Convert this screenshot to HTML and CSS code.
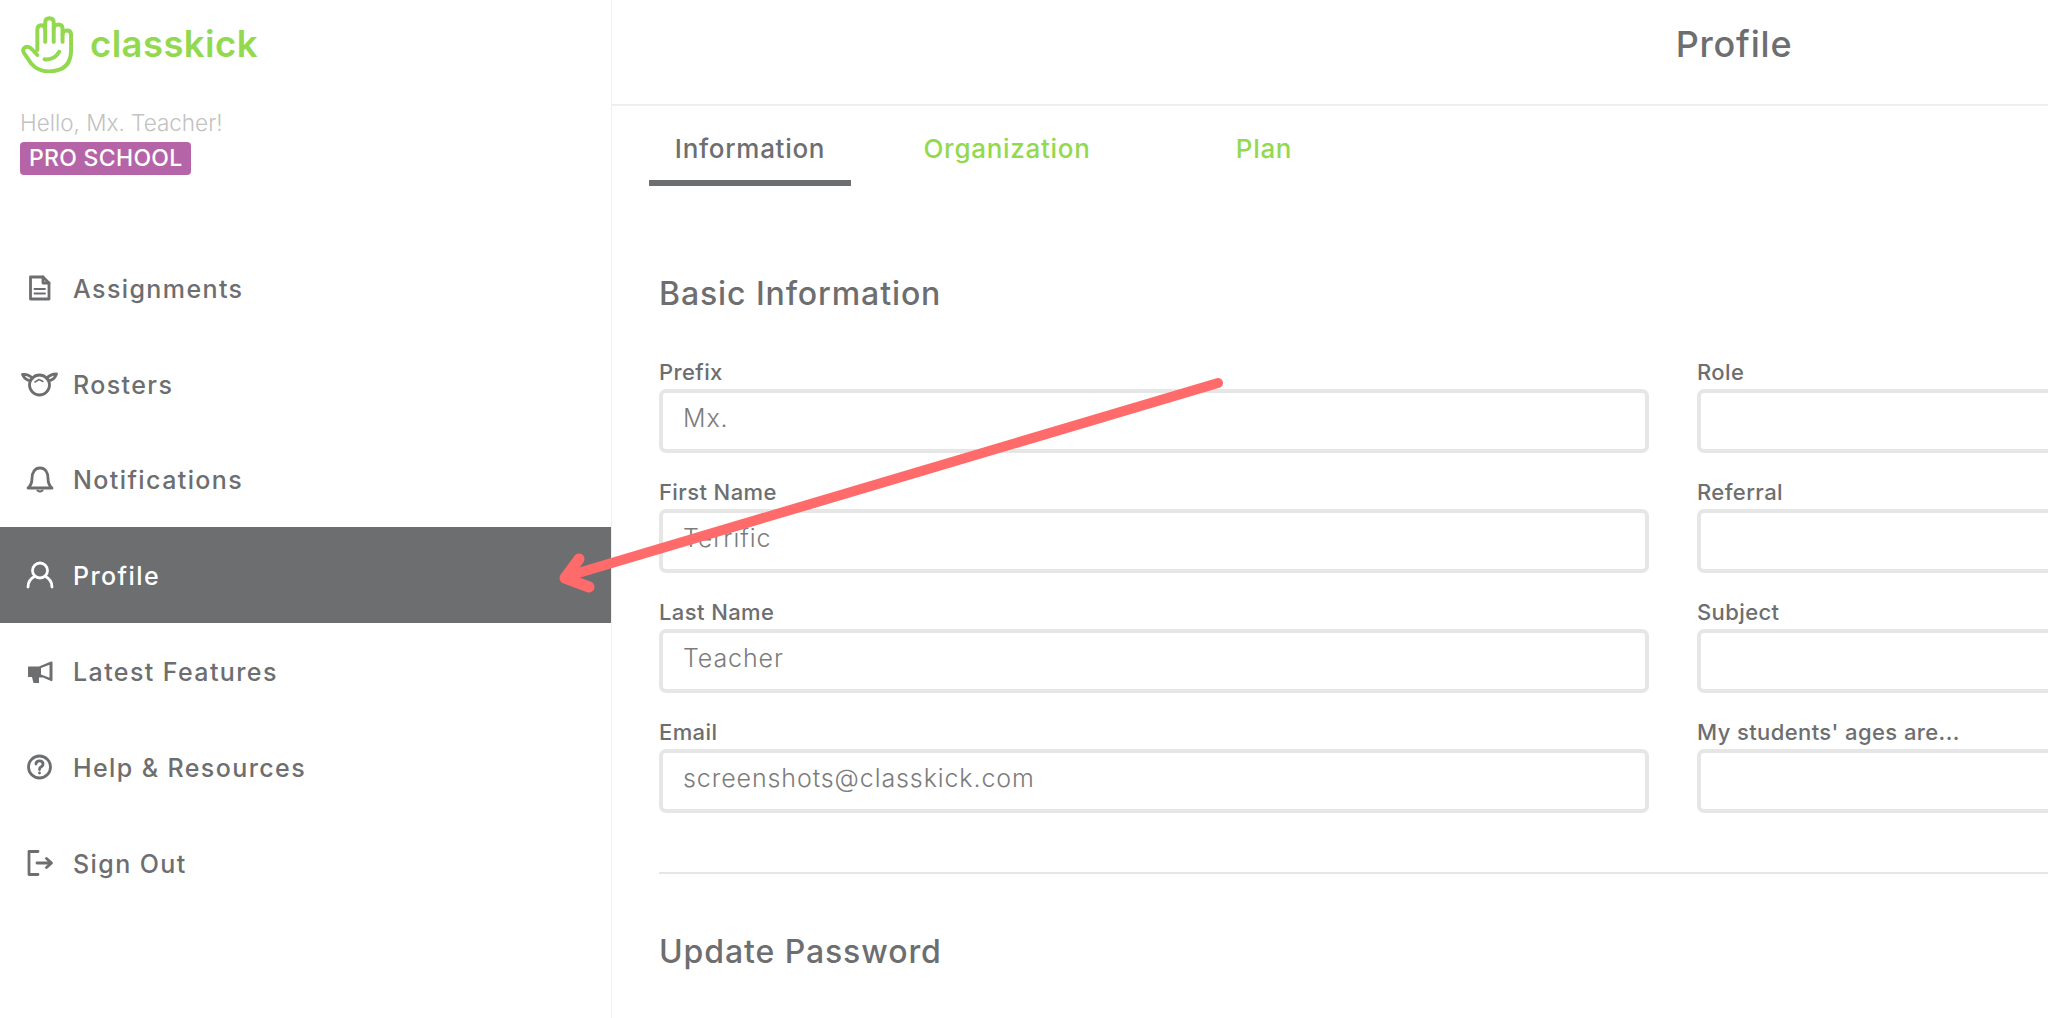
FILE: index.html
```html
<!DOCTYPE html>
<html lang="en">
<head>
  <meta charset="UTF-8">
  <title>Profile</title>
  <link rel="stylesheet" href="styles.css">
</head>
<body>
  <div class="page">
    <aside class="sidebar">
      <div class="sidebar-head">
        <div class="brand">
          <svg class="brand-hand" viewBox="58 46 160 174" fill="none" stroke="#93d94f" stroke-width="12" stroke-linecap="round" stroke-linejoin="round">
            <path d="M110 150V88Q110 74 122 74Q134 74 134 88V66Q134 53 147 53Q160 53 160 66V85Q160 72 174 72Q187 72 187 85V103Q187 90 200 90Q213 90 213 103V150Q213 215 145 215Q112 215 92 192L70 160Q62 148 72 142Q82 136 92 146L110 165"/>
            <path d="M134 88V125M160 85V125M187 103V125"/>
            <path d="M132 178Q160 182 177 155"/>
          </svg>
          <span class="brand-name">classkick</span>
        </div>
        <div class="hello">Hello, Mx. Teacher!</div>
        <span class="plan-badge">PRO SCHOOL</span>
      </div>

      <nav class="nav">
        <a class="nav-item" href="#">
          <svg class="nav-icon" viewBox="0 0 40 28" fill="none" stroke="currentColor" stroke-width="2.800" stroke-linejoin="round" stroke-linecap="round">
            <path d="M10.5 3H23L29 9V25H10.5Z"/><path d="M23 3V9H29"/><path d="M14.500 15H25M14.500 19.500H25" stroke-width="1.800"/>
          </svg>
          <span>Assignments</span>
        </a>
        <a class="nav-item" href="#">
          <svg class="nav-icon" viewBox="0 0 40 28" fill="none" stroke="currentColor" stroke-width="2.800" stroke-linejoin="round" stroke-linecap="round">
            <circle cx="19.500" cy="15" r="10"/>
            <path d="M12.500 8.500C9.500 5 6 4 2.500 4.500C4 8 7 10.500 10.500 10.500"/>
            <path d="M26.500 8.500C29.500 5 33 4 36.500 4C35 8 32 10.500 28.500 10.500"/>
            <path d="M15 12L19 9.500M20 10L23 11.500" stroke-width="1.500"/>
          </svg>
          <span>Rosters</span>
        </a>
        <a class="nav-item" href="#">
          <svg class="nav-icon" viewBox="0 0 40 28" fill="none" stroke="currentColor" stroke-width="2.800" stroke-linejoin="round" stroke-linecap="round">
            <path d="M8 23C11 20.500 12 18.500 12 13.500C12 7 15 3 20 3C25 3 28 7 28 13.500C28 18.500 29 20.500 32 23Z"/>
            <path d="M17.500 25.500Q20 27.500 22.500 25.500" stroke-width="2"/>
          </svg>
          <span>Notifications</span>
        </a>
        <a class="nav-item nav-item-active" href="#">
          <svg class="nav-icon" viewBox="0 0 40 28" fill="none" stroke="currentColor" stroke-width="2.800" stroke-linecap="round">
            <circle cx="20" cy="9.500" r="7.500"/>
            <path d="M8 26C8 20.500 10.500 17.500 14.500 15.500M32 26C32 20.500 29.500 17.500 25.500 15.500"/>
          </svg>
          <span>Profile</span>
        </a>
        <a class="nav-item" href="#">
          <svg class="nav-icon" viewBox="0 0 40 28" fill="currentColor">
            <path d="M8.500 9.500H19L31 4.500Q32.500 4 32.500 5.500V23Q32.500 24.500 31 24L23 20.500H19V26H13.500L12 20H8.500Q8 20 8 19.500V10Q8 9.500 8.500 9.500Z"/>
            <path d="M21 11L29.500 7.800V20.800L21 17.500Z" fill="#fff"/>
          </svg>
          <span>Latest Features</span>
        </a>
        <a class="nav-item" href="#">
          <svg class="nav-icon" viewBox="0 0 40 28" fill="none" stroke="currentColor" stroke-width="2.800" stroke-linecap="round">
            <circle cx="19.500" cy="14" r="11"/>
            <path d="M16 11Q16 7.800 19.500 7.800Q23 7.800 23 11Q23 13 20.800 14Q19.500 14.800 19.500 16.500"/>
            <path d="M19.500 20V20.100" stroke-width="2.800"/>
          </svg>
          <span>Help &amp; Resources</span>
        </a>
        <a class="nav-item" href="#">
          <svg class="nav-icon" viewBox="0 0 40 28" fill="none" stroke="currentColor" stroke-width="2.800" stroke-linecap="round" stroke-linejoin="round">
            <path d="M18 2.500H9V25.500H18"/>
            <path d="M17 14H31M26.500 9.500L31.500 14L26.500 18.500"/>
          </svg>
          <span>Sign Out</span>
        </a>
      </nav>
    </aside>

    <main class="main">
      <header class="topbar">Profile</header>

      <div class="tabs">
        <a class="tab tab-active" href="#">Information</a>
        <a class="tab" href="#">Organization</a>
        <a class="tab" href="#">Plan</a>
      </div>

      <div class="content">
        <h2 class="section-title">Basic Information</h2>
        <div class="form-grid">
          <div class="field">
            <label class="field-label">Prefix</label>
            <input class="field-input" type="text" value="Mx.">
          </div>
          <div class="field">
            <label class="field-label">Role</label>
            <input class="field-input" type="text">
          </div>
          <div class="field">
            <label class="field-label">First Name</label>
            <input class="field-input" type="text" value="Terrific">
          </div>
          <div class="field">
            <label class="field-label">Referral</label>
            <input class="field-input" type="text">
          </div>
          <div class="field">
            <label class="field-label">Last Name</label>
            <input class="field-input" type="text" value="Teacher">
          </div>
          <div class="field">
            <label class="field-label">Subject</label>
            <input class="field-input" type="text">
          </div>
          <div class="field">
            <label class="field-label">Email</label>
            <input class="field-input" type="text" value="screenshots@classkick.com">
          </div>
          <div class="field">
            <label class="field-label">My students' ages are...</label>
            <input class="field-input" type="text">
          </div>
        </div>
        <hr class="divider">
        <h2 class="section-title section-title-password">Update Password</h2>
      </div>
    </main>
  </div>

  <!-- annotation drawn over the page -->
  <svg class="arrow" viewBox="0 0 2048 1018" fill="none" stroke="#ff6b6b" stroke-linecap="round" stroke-linejoin="round">
    <path d="M1218 383L568 576" stroke-width="10"/>
    <path d="M579 559L565 578L589 587" stroke-width="11"/>
  </svg>
</body>
</html>
```

FILE: styles.css
```css
* {
  box-sizing: border-box;
  margin: 0;
  padding: 0;
}

html, body {
  height: 100%;
  overflow: hidden;
}

body {
  position: relative;
  background: #fff;
  color: #6d6e70;
  font-family: Inter, "Liberation Sans", sans-serif;
}

a {
  text-decoration: none;
  color: inherit;
}

.page {
  display: flex;
  height: 1018px;
}

/* sidebar */
.sidebar {
  flex: 0 0 612px;
  border-right: 1px solid #f0f0f0;
}

.sidebar-head {
  height: 240px;
  padding: 16px 20px 0;
}

.brand {
  display: flex;
  align-items: center;
  gap: 17px;
}

.brand-hand {
  width: 53px;
  height: 57px;
}

.brand-name {
  color: #93d94f;
  font-size: 36.500px;
  font-weight: 600;
  letter-spacing: 0.4px;
  line-height: 57px;
}

.hello {
  margin-top: 37px;
  color: #c2c2c2;
  font-size: 22.500px;
  font-weight: 300;
  line-height: 26px;
}

.plan-badge {
  display: inline-block;
  margin-top: 6px;
  padding: 0 8px 0 9px;
  background: #b565a7;
  border-radius: 4px;
  color: #fff;
  font-size: 23px;
  font-weight: 500;
  letter-spacing: 0.3px;
  line-height: 33px;
}

.nav-item {
  display: flex;
  align-items: center;
  gap: 13px;
  height: 95.8px;
  padding-left: 20px;
  font-size: 25px;
  font-weight: 500;
  letter-spacing: 1.4px;
}

.nav-item span {
  padding-top: 2px;
}

.nav-item-active {
  background: #6d6e70;
  color: #fff;
}

.nav-icon {
  flex: none;
  width: 40px;
  height: 28px;
}

/* main column runs past the right edge of the window */
.main {
  flex: none;
  width: 2244px;
}

.topbar {
  height: 106px;
  border-bottom: 2px solid #eee;
  font-size: 36px;
  font-weight: 500;
  letter-spacing: 0.8px;
  line-height: 88px;
  text-align: center;
}

.tabs {
  display: flex;
  gap: 55px;
  padding-left: 37px;
}

.tab {
  width: 202px;
  height: 80px;
  color: #93d94f;
  font-size: 26px;
  font-weight: 500;
  letter-spacing: 0.7px;
  line-height: 86px;
  text-align: center;
}

.tab-active {
  border-bottom: 6px solid #6d6e70;
  color: #6d6e70;
}

.content {
  padding: 0 169px 0 47px;
}

.section-title {
  margin-top: 88px;
  font-size: 32px;
  font-weight: 500;
  letter-spacing: 0.9px;
  line-height: 40px;
}

.form-grid {
  display: grid;
  grid-template-columns: 1fr 1fr;
  gap: 0 48px;
  margin-top: 46px;
}

.field {
  height: 120px;
}

.field-label {
  display: block;
  height: 24px;
  margin-bottom: 5px;
  font-size: 22px;
  font-weight: 500;
  letter-spacing: 0.4px;
  line-height: 24px;
}

.field-input {
  display: block;
  width: 100%;
  height: 64px;
  padding: 0 20px 6px;
  background: #fff;
  border: 4px solid #e6e6e6;
  border-radius: 7px;
  color: #7c7c7c;
  font-family: inherit;
  font-size: 25px;
  font-weight: 300;
  letter-spacing: 0.9px;
  outline: none;
}

.divider {
  margin-top: 32px;
  border: 0;
  border-top: 2px solid #e6e6e6;
}

.section-title-password {
  margin-top: 58px;
}

.arrow {
  position: absolute;
  top: 0;
  left: 0;
  width: 2048px;
  height: 1018px;
  pointer-events: none;
}
```
